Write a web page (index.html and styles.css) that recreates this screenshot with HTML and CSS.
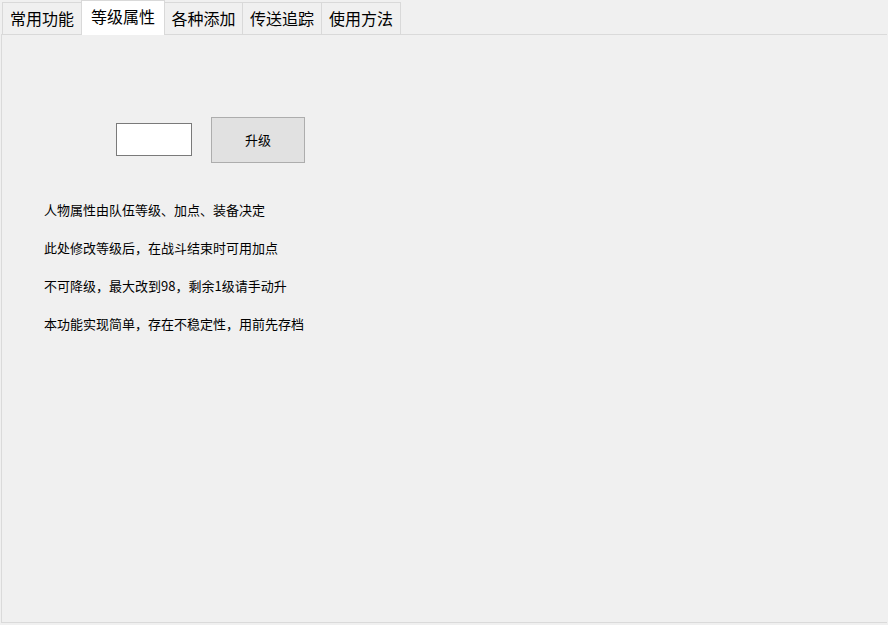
FILE: index.html
```html
<!DOCTYPE html>
<html lang="zh-CN">
<head>
<meta charset="utf-8">
<link rel="stylesheet" href="styles.css">
</head>
<body>
<div class="window">
  <div class="tabs">
    <div class="tab t1">常用功能</div>
    <div class="tab t2 active">等级属性</div>
    <div class="tab t3">各种添加</div>
    <div class="tab t4">传送追踪</div>
    <div class="tab t5">使用方法</div>
  </div>
  <div class="panel">
    <div class="row">
      <input class="level" type="text">
      <button class="btn">升级</button>
    </div>
    <div class="notes">
      <p>人物属性由队伍等级、加点、装备决定</p>
      <p>此处修改等级后，在战斗结束时可用加点</p>
      <p>不可降级，最大改到98，剩余1级请手动升</p>
      <p>本功能实现简单，存在不稳定性，用前先存档</p>
    </div>
  </div>
</div>
</body>
</html>
```

FILE: styles.css
```css
html, body {
  margin: 0;
  padding: 0;
  background: #f0f0f0;
  width: 888px;
  height: 625px;
  overflow: hidden;
  font-family: "Microsoft YaHei", "Noto Sans CJK SC", sans-serif;
  color: #000;
}
.window {
  display: flex;
  flex-direction: column;
  height: 625px;
}
.tabs {
  display: flex;
  align-items: flex-start;
  height: 35px;
  padding-left: 2px;
  position: relative;
  z-index: 1;
}
.tab {
  box-sizing: border-box;
  height: 33px;
  margin-top: 2px;
  border: 1px solid #d9d9d9;
  border-left: none;
  background: #f0f0f0;
  font-size: 16px;
  line-height: 31px;
  text-align: center;
  white-space: nowrap;
}
.t1 { width: 80px; border-left: 1px solid #d9d9d9; }
.t3 { width: 78px; }
.t4 { width: 79px; }
.t5 { width: 79px; }
.tab.active {
  width: 84px;
  height: 35px;
  margin-top: 0;
  margin-left: -1px;
  background: #ffffff;
  border-left: 1px solid #d9d9d9;
  border-bottom: none;
  line-height: 31px;
}
.panel {
  flex: 1;
  box-sizing: border-box;
  margin: -1px 1px 2px 1px;
  border: 1px solid #dadada;
  border-right: none;
  background: #f0f0f0;
  padding: 82px 0 0 0;
}
.row {
  display: flex;
  align-items: flex-start;
  padding-left: 114px;
  height: 46px;
}
.level {
  box-sizing: border-box;
  width: 76px;
  height: 33px;
  margin: 6px 0 0 0;
  border: 1px solid #7a7a7a;
  background: #fff;
  padding: 0;
  outline: none;
}
.btn {
  box-sizing: border-box;
  width: 94px;
  height: 46px;
  margin-left: 19px;
  border: 1px solid #adadad;
  background: #e1e1e1;
  font-family: "Microsoft YaHei", "Noto Sans CJK SC", sans-serif;
  font-size: 13px;
  line-height: 44px;
  color: #000;
  padding: 0;
}
.notes {
  margin-top: 28px;
  padding-left: 42px;
  font-size: 13px;
  line-height: 38px;
}
.notes p {
  margin: 0;
}
```
